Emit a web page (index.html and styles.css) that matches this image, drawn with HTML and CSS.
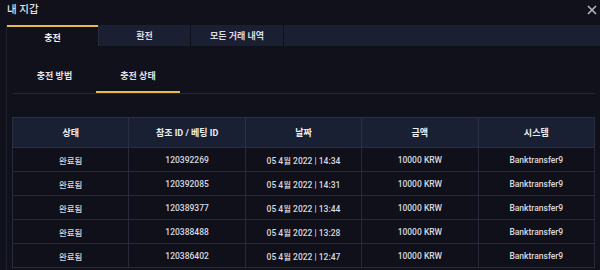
FILE: index.html
```html
<!DOCTYPE html>
<html lang="ko">
<head>
<meta charset="utf-8">
<title>내 지갑</title>
<link rel="stylesheet" href="styles.css">
</head>
<body>
<div class="modal">
  <div class="modal-head">
    <div class="title">내 지갑</div>
    <svg class="close" width="10" height="10" viewBox="0 0 10 10"><path d="M1 1 L9 9 M9 1 L1 9" stroke="#b4b7c3" stroke-width="1.6" fill="none"/></svg>
  </div>
  <div class="panel">
    <div class="tabs">
      <div class="tab active">충전</div>
      <div class="tab t2">환전</div>
      <div class="tab t3">모든 거래 내역</div>
      <div class="tab rest"></div>
    </div>
    <div class="subtabs">
      <div class="subtab s1">충전 방법</div>
      <div class="subtab s2 on">충전 상태</div>
    </div>
    <table class="grid">
      <thead>
        <tr><th>상태</th><th>참조 ID / 베팅 ID</th><th>날짜</th><th>금액</th><th>시스템</th></tr>
      </thead>
      <tbody>
        <tr><td>완료됨</td><td>120392269</td><td>05 4월 2022 | 14:34</td><td>10000 KRW</td><td>Banktransfer9</td></tr>
        <tr><td>완료됨</td><td>120392085</td><td>05 4월 2022 | 14:31</td><td>10000 KRW</td><td>Banktransfer9</td></tr>
        <tr><td>완료됨</td><td>120389377</td><td>05 4월 2022 | 13:44</td><td>10000 KRW</td><td>Banktransfer9</td></tr>
        <tr><td>완료됨</td><td>120388488</td><td>05 4월 2022 | 13:28</td><td>10000 KRW</td><td>Banktransfer9</td></tr>
        <tr><td>완료됨</td><td>120386402</td><td>05 4월 2022 | 12:47</td><td>10000 KRW</td><td>Banktransfer9</td></tr>
      </tbody>
    </table>
  </div>
</div>
</body>
</html>
```
FILE: styles.css
```css
html, body {
  margin: 0;
  padding: 0;
  background: #10111b;
  height: 100%;
  overflow: hidden;
}
body {
  font-family: Roboto, "Noto Sans CJK KR", sans-serif;
  color: #e4e5ea;
}
.modal {
  width: 600px;
  height: 270px;
}
.modal-head {
  height: 25px;
  display: flex;
  justify-content: space-between;
  align-items: flex-start;
  box-sizing: border-box;
  padding: 2px 3px 0 7px;
}
.title {
  font-size: 10.5px;
  line-height: 16px;
  font-weight: 500;
  color: #e2e3e8;
}
.close {
  margin-top: 3px;
}
.panel {
  margin-left: 6px;
  border-left: 1px solid #1f2231;
  height: 245px;
}
.tabs {
  display: flex;
  height: 21px;
}
.tab {
  box-sizing: border-box;
  height: 21px;
  font-size: 9px;
  font-weight: 700;
  display: flex;
  align-items: center;
  justify-content: center;
  background: #1a1f32;
  color: #dcdde4;
}
.tab.active {
  width: 91px;
  background: #10111b;
  border-top: 2px solid #e9b949;
  padding-top: 1px;
  color: #eef0f4;
}
.tab.t2 {
  width: 92px;
  border-left: 1px solid #262b3d;
}
.tab.t3 {
  width: 93px;
  border-left: 1px solid #0f111a;
}
.tab.rest {
  flex: 1;
  border-left: 1px solid #0f111a;
}
.subtabs {
  display: flex;
  margin: 16px 0 0 6px;
  width: 582px;
  border-bottom: 1px solid #23263a;
  height: 32px;
  box-sizing: border-box;
}
.subtab {
  box-sizing: border-box;
  height: 31px;
  font-size: 9px;
  font-weight: 700;
  line-height: 28px;
  text-align: center;
  color: #e2e3e8;
}
.subtab.s1 { width: 83px; }
.subtab.s2 { width: 84px; }
.subtab.on {
  border-bottom: 2px solid #e9b949;
}
.grid {
  margin: 23px 0 0 5px;
  width: 583px;
  table-layout: fixed;
  border-collapse: collapse;
  border: 1px solid #2a2f40;
}
.grid th {
  height: 29px;
  background: #1a2033;
  font-size: 9px;
  font-weight: 700;
  color: #eceef3;
  border: 1px solid #2a2f40;
  padding: 0;
}
.grid td {
  height: 23px;
  font-size: 8.5px;
  font-weight: 500;
  color: #d9dae0;
  text-align: center;
  border: 1px solid #262a3a;
  padding: 0;
  background: #0f1019;
}
```
